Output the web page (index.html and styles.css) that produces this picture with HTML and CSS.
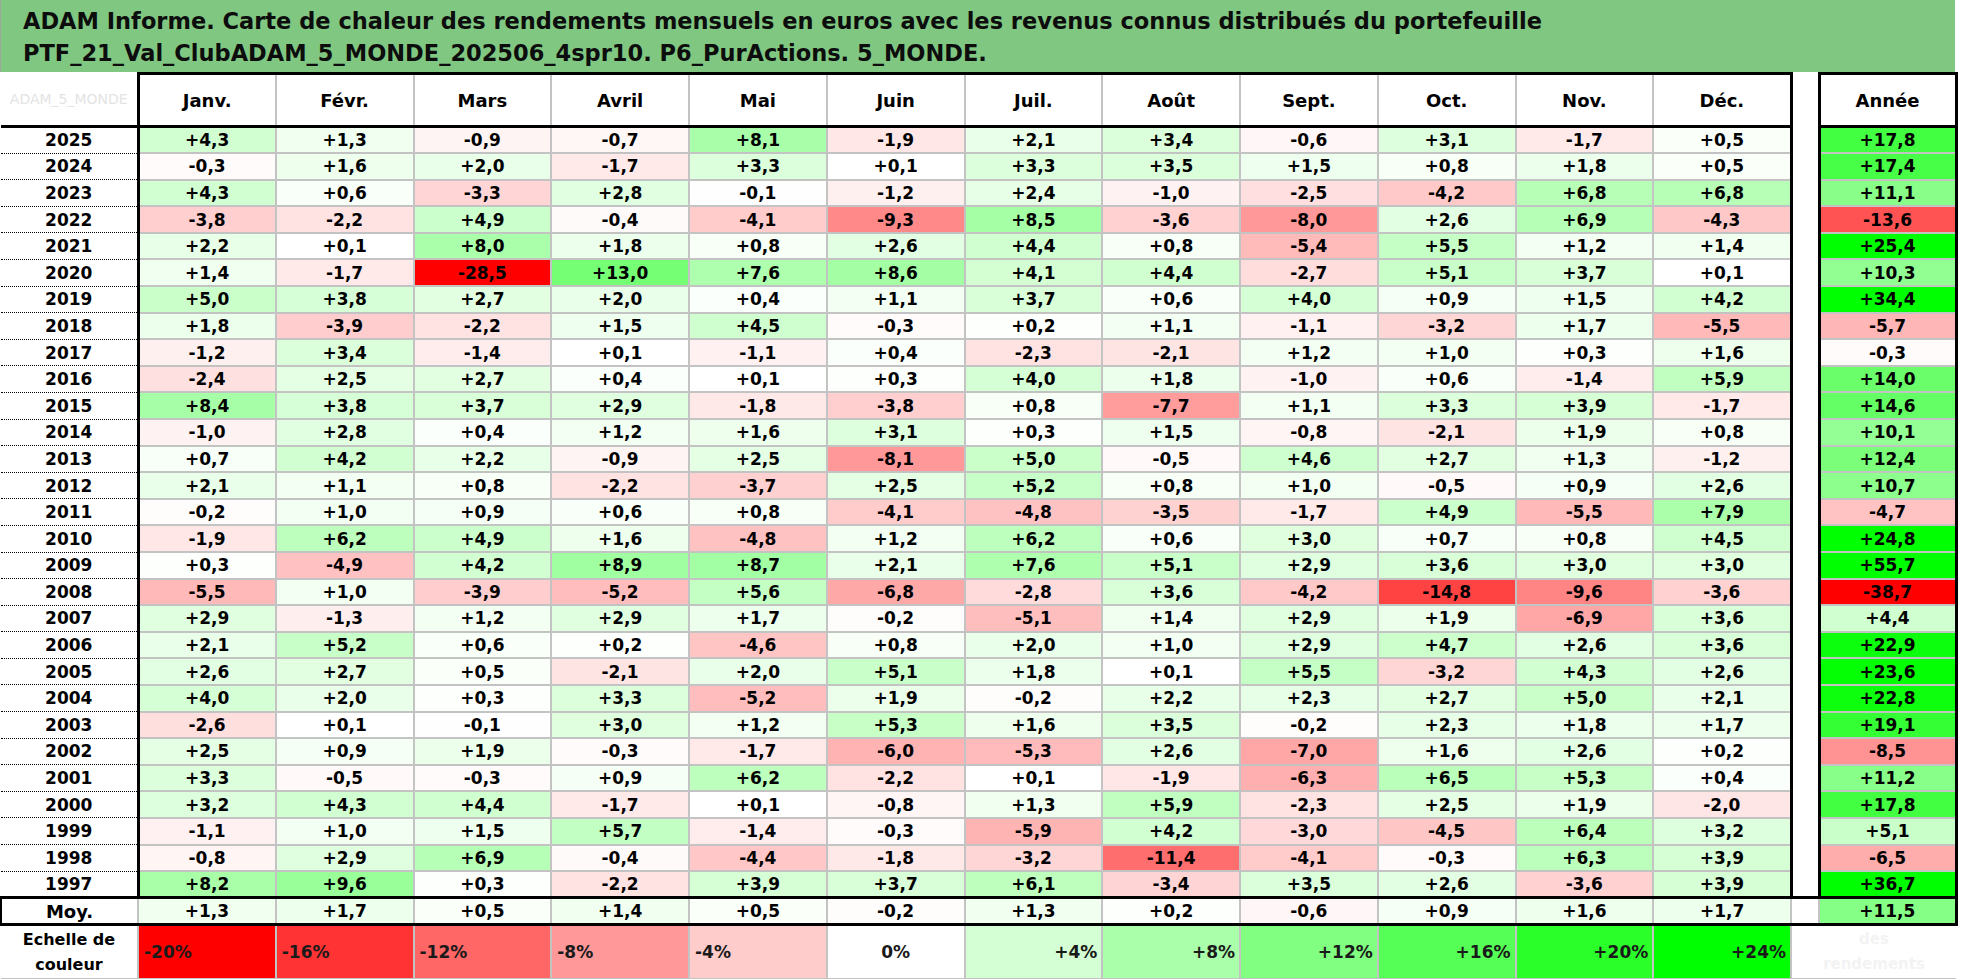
FILE: index.html
```html
<!DOCTYPE html>
<html lang="fr">
<head>
<meta charset="utf-8">
<title>ADAM Informe - Carte de chaleur</title>
<link rel="stylesheet" href="styles.css">
</head>
<body>
<div class="title">
  <div class="title-line">ADAM Informe. Carte de chaleur des rendements mensuels en euros avec les revenus connus distribués du portefeuille</div>
  <div class="title-line">PTF_21_Val_ClubADAM_5_MONDE_202506_4spr10. P6_PurActions. 5_MONDE.</div>
</div>
<table class="heat">
  <colgroup>
    <col class="c-year">
    <col class="c-m"><col class="c-m"><col class="c-m"><col class="c-m"><col class="c-m"><col class="c-m">
    <col class="c-m"><col class="c-m"><col class="c-m"><col class="c-m"><col class="c-m"><col class="c-m">
    <col class="c-gap">
    <col class="c-an">
  </colgroup>
  <thead>
    <tr class="hdr">
      <th class="corner"><span class="ghost-name">ADAM_5_MONDE</span></th>
      <th>Janv.</th><th>Févr.</th><th>Mars</th><th>Avril</th><th>Mai</th><th>Juin</th>
      <th>Juil.</th><th>Août</th><th>Sept.</th><th>Oct.</th><th>Nov.</th><th class="dec">Déc.</th>
      <th class="gap"></th><th class="an">Année</th>
    </tr>
  </thead>
  <tbody>
    <tr class="r"><th class="yr">2025</th><td class="v">+4,3</td><td class="v">+1,3</td><td class="v">-0,9</td><td class="v">-0,7</td><td class="v">+8,1</td><td class="v">-1,9</td><td class="v">+2,1</td><td class="v">+3,4</td><td class="v">-0,6</td><td class="v">+3,1</td><td class="v">-1,7</td><td class="v dec">+0,5</td><td class="gap"></td><td class="v an">+17,8</td></tr>
    <tr class="r"><th class="yr">2024</th><td class="v">-0,3</td><td class="v">+1,6</td><td class="v">+2,0</td><td class="v">-1,7</td><td class="v">+3,3</td><td class="v">+0,1</td><td class="v">+3,3</td><td class="v">+3,5</td><td class="v">+1,5</td><td class="v">+0,8</td><td class="v">+1,8</td><td class="v dec">+0,5</td><td class="gap"></td><td class="v an">+17,4</td></tr>
    <tr class="r"><th class="yr">2023</th><td class="v">+4,3</td><td class="v">+0,6</td><td class="v">-3,3</td><td class="v">+2,8</td><td class="v">-0,1</td><td class="v">-1,2</td><td class="v">+2,4</td><td class="v">-1,0</td><td class="v">-2,5</td><td class="v">-4,2</td><td class="v">+6,8</td><td class="v dec">+6,8</td><td class="gap"></td><td class="v an">+11,1</td></tr>
    <tr class="r"><th class="yr">2022</th><td class="v">-3,8</td><td class="v">-2,2</td><td class="v">+4,9</td><td class="v">-0,4</td><td class="v">-4,1</td><td class="v">-9,3</td><td class="v">+8,5</td><td class="v">-3,6</td><td class="v">-8,0</td><td class="v">+2,6</td><td class="v">+6,9</td><td class="v dec">-4,3</td><td class="gap"></td><td class="v an">-13,6</td></tr>
    <tr class="r"><th class="yr">2021</th><td class="v">+2,2</td><td class="v">+0,1</td><td class="v">+8,0</td><td class="v">+1,8</td><td class="v">+0,8</td><td class="v">+2,6</td><td class="v">+4,4</td><td class="v">+0,8</td><td class="v">-5,4</td><td class="v">+5,5</td><td class="v">+1,2</td><td class="v dec">+1,4</td><td class="gap"></td><td class="v an">+25,4</td></tr>
    <tr class="r"><th class="yr">2020</th><td class="v">+1,4</td><td class="v">-1,7</td><td class="v">-28,5</td><td class="v">+13,0</td><td class="v">+7,6</td><td class="v">+8,6</td><td class="v">+4,1</td><td class="v">+4,4</td><td class="v">-2,7</td><td class="v">+5,1</td><td class="v">+3,7</td><td class="v dec">+0,1</td><td class="gap"></td><td class="v an">+10,3</td></tr>
    <tr class="r"><th class="yr">2019</th><td class="v">+5,0</td><td class="v">+3,8</td><td class="v">+2,7</td><td class="v">+2,0</td><td class="v">+0,4</td><td class="v">+1,1</td><td class="v">+3,7</td><td class="v">+0,6</td><td class="v">+4,0</td><td class="v">+0,9</td><td class="v">+1,5</td><td class="v dec">+4,2</td><td class="gap"></td><td class="v an">+34,4</td></tr>
    <tr class="r"><th class="yr">2018</th><td class="v">+1,8</td><td class="v">-3,9</td><td class="v">-2,2</td><td class="v">+1,5</td><td class="v">+4,5</td><td class="v">-0,3</td><td class="v">+0,2</td><td class="v">+1,1</td><td class="v">-1,1</td><td class="v">-3,2</td><td class="v">+1,7</td><td class="v dec">-5,5</td><td class="gap"></td><td class="v an">-5,7</td></tr>
    <tr class="r"><th class="yr">2017</th><td class="v">-1,2</td><td class="v">+3,4</td><td class="v">-1,4</td><td class="v">+0,1</td><td class="v">-1,1</td><td class="v">+0,4</td><td class="v">-2,3</td><td class="v">-2,1</td><td class="v">+1,2</td><td class="v">+1,0</td><td class="v">+0,3</td><td class="v dec">+1,6</td><td class="gap"></td><td class="v an">-0,3</td></tr>
    <tr class="r"><th class="yr">2016</th><td class="v">-2,4</td><td class="v">+2,5</td><td class="v">+2,7</td><td class="v">+0,4</td><td class="v">+0,1</td><td class="v">+0,3</td><td class="v">+4,0</td><td class="v">+1,8</td><td class="v">-1,0</td><td class="v">+0,6</td><td class="v">-1,4</td><td class="v dec">+5,9</td><td class="gap"></td><td class="v an">+14,0</td></tr>
    <tr class="r"><th class="yr">2015</th><td class="v">+8,4</td><td class="v">+3,8</td><td class="v">+3,7</td><td class="v">+2,9</td><td class="v">-1,8</td><td class="v">-3,8</td><td class="v">+0,8</td><td class="v">-7,7</td><td class="v">+1,1</td><td class="v">+3,3</td><td class="v">+3,9</td><td class="v dec">-1,7</td><td class="gap"></td><td class="v an">+14,6</td></tr>
    <tr class="r"><th class="yr">2014</th><td class="v">-1,0</td><td class="v">+2,8</td><td class="v">+0,4</td><td class="v">+1,2</td><td class="v">+1,6</td><td class="v">+3,1</td><td class="v">+0,3</td><td class="v">+1,5</td><td class="v">-0,8</td><td class="v">-2,1</td><td class="v">+1,9</td><td class="v dec">+0,8</td><td class="gap"></td><td class="v an">+10,1</td></tr>
    <tr class="r"><th class="yr">2013</th><td class="v">+0,7</td><td class="v">+4,2</td><td class="v">+2,2</td><td class="v">-0,9</td><td class="v">+2,5</td><td class="v">-8,1</td><td class="v">+5,0</td><td class="v">-0,5</td><td class="v">+4,6</td><td class="v">+2,7</td><td class="v">+1,3</td><td class="v dec">-1,2</td><td class="gap"></td><td class="v an">+12,4</td></tr>
    <tr class="r"><th class="yr">2012</th><td class="v">+2,1</td><td class="v">+1,1</td><td class="v">+0,8</td><td class="v">-2,2</td><td class="v">-3,7</td><td class="v">+2,5</td><td class="v">+5,2</td><td class="v">+0,8</td><td class="v">+1,0</td><td class="v">-0,5</td><td class="v">+0,9</td><td class="v dec">+2,6</td><td class="gap"></td><td class="v an">+10,7</td></tr>
    <tr class="r"><th class="yr">2011</th><td class="v">-0,2</td><td class="v">+1,0</td><td class="v">+0,9</td><td class="v">+0,6</td><td class="v">+0,8</td><td class="v">-4,1</td><td class="v">-4,8</td><td class="v">-3,5</td><td class="v">-1,7</td><td class="v">+4,9</td><td class="v">-5,5</td><td class="v dec">+7,9</td><td class="gap"></td><td class="v an">-4,7</td></tr>
    <tr class="r"><th class="yr">2010</th><td class="v">-1,9</td><td class="v">+6,2</td><td class="v">+4,9</td><td class="v">+1,6</td><td class="v">-4,8</td><td class="v">+1,2</td><td class="v">+6,2</td><td class="v">+0,6</td><td class="v">+3,0</td><td class="v">+0,7</td><td class="v">+0,8</td><td class="v dec">+4,5</td><td class="gap"></td><td class="v an">+24,8</td></tr>
    <tr class="r"><th class="yr">2009</th><td class="v">+0,3</td><td class="v">-4,9</td><td class="v">+4,2</td><td class="v">+8,9</td><td class="v">+8,7</td><td class="v">+2,1</td><td class="v">+7,6</td><td class="v">+5,1</td><td class="v">+2,9</td><td class="v">+3,6</td><td class="v">+3,0</td><td class="v dec">+3,0</td><td class="gap"></td><td class="v an">+55,7</td></tr>
    <tr class="r"><th class="yr">2008</th><td class="v">-5,5</td><td class="v">+1,0</td><td class="v">-3,9</td><td class="v">-5,2</td><td class="v">+5,6</td><td class="v">-6,8</td><td class="v">-2,8</td><td class="v">+3,6</td><td class="v">-4,2</td><td class="v">-14,8</td><td class="v">-9,6</td><td class="v dec">-3,6</td><td class="gap"></td><td class="v an">-38,7</td></tr>
    <tr class="r"><th class="yr">2007</th><td class="v">+2,9</td><td class="v">-1,3</td><td class="v">+1,2</td><td class="v">+2,9</td><td class="v">+1,7</td><td class="v">-0,2</td><td class="v">-5,1</td><td class="v">+1,4</td><td class="v">+2,9</td><td class="v">+1,9</td><td class="v">-6,9</td><td class="v dec">+3,6</td><td class="gap"></td><td class="v an">+4,4</td></tr>
    <tr class="r"><th class="yr">2006</th><td class="v">+2,1</td><td class="v">+5,2</td><td class="v">+0,6</td><td class="v">+0,2</td><td class="v">-4,6</td><td class="v">+0,8</td><td class="v">+2,0</td><td class="v">+1,0</td><td class="v">+2,9</td><td class="v">+4,7</td><td class="v">+2,6</td><td class="v dec">+3,6</td><td class="gap"></td><td class="v an">+22,9</td></tr>
    <tr class="r"><th class="yr">2005</th><td class="v">+2,6</td><td class="v">+2,7</td><td class="v">+0,5</td><td class="v">-2,1</td><td class="v">+2,0</td><td class="v">+5,1</td><td class="v">+1,8</td><td class="v">+0,1</td><td class="v">+5,5</td><td class="v">-3,2</td><td class="v">+4,3</td><td class="v dec">+2,6</td><td class="gap"></td><td class="v an">+23,6</td></tr>
    <tr class="r"><th class="yr">2004</th><td class="v">+4,0</td><td class="v">+2,0</td><td class="v">+0,3</td><td class="v">+3,3</td><td class="v">-5,2</td><td class="v">+1,9</td><td class="v">-0,2</td><td class="v">+2,2</td><td class="v">+2,3</td><td class="v">+2,7</td><td class="v">+5,0</td><td class="v dec">+2,1</td><td class="gap"></td><td class="v an">+22,8</td></tr>
    <tr class="r"><th class="yr">2003</th><td class="v">-2,6</td><td class="v">+0,1</td><td class="v">-0,1</td><td class="v">+3,0</td><td class="v">+1,2</td><td class="v">+5,3</td><td class="v">+1,6</td><td class="v">+3,5</td><td class="v">-0,2</td><td class="v">+2,3</td><td class="v">+1,8</td><td class="v dec">+1,7</td><td class="gap"></td><td class="v an">+19,1</td></tr>
    <tr class="r"><th class="yr">2002</th><td class="v">+2,5</td><td class="v">+0,9</td><td class="v">+1,9</td><td class="v">-0,3</td><td class="v">-1,7</td><td class="v">-6,0</td><td class="v">-5,3</td><td class="v">+2,6</td><td class="v">-7,0</td><td class="v">+1,6</td><td class="v">+2,6</td><td class="v dec">+0,2</td><td class="gap"></td><td class="v an">-8,5</td></tr>
    <tr class="r"><th class="yr">2001</th><td class="v">+3,3</td><td class="v">-0,5</td><td class="v">-0,3</td><td class="v">+0,9</td><td class="v">+6,2</td><td class="v">-2,2</td><td class="v">+0,1</td><td class="v">-1,9</td><td class="v">-6,3</td><td class="v">+6,5</td><td class="v">+5,3</td><td class="v dec">+0,4</td><td class="gap"></td><td class="v an">+11,2</td></tr>
    <tr class="r"><th class="yr">2000</th><td class="v">+3,2</td><td class="v">+4,3</td><td class="v">+4,4</td><td class="v">-1,7</td><td class="v">+0,1</td><td class="v">-0,8</td><td class="v">+1,3</td><td class="v">+5,9</td><td class="v">-2,3</td><td class="v">+2,5</td><td class="v">+1,9</td><td class="v dec">-2,0</td><td class="gap"></td><td class="v an">+17,8</td></tr>
    <tr class="r"><th class="yr">1999</th><td class="v">-1,1</td><td class="v">+1,0</td><td class="v">+1,5</td><td class="v">+5,7</td><td class="v">-1,4</td><td class="v">-0,3</td><td class="v">-5,9</td><td class="v">+4,2</td><td class="v">-3,0</td><td class="v">-4,5</td><td class="v">+6,4</td><td class="v dec">+3,2</td><td class="gap"></td><td class="v an">+5,1</td></tr>
    <tr class="r"><th class="yr">1998</th><td class="v">-0,8</td><td class="v">+2,9</td><td class="v">+6,9</td><td class="v">-0,4</td><td class="v">-4,4</td><td class="v">-1,8</td><td class="v">-3,2</td><td class="v">-11,4</td><td class="v">-4,1</td><td class="v">-0,3</td><td class="v">+6,3</td><td class="v dec">+3,9</td><td class="gap"></td><td class="v an">-6,5</td></tr>
    <tr class="r"><th class="yr">1997</th><td class="v">+8,2</td><td class="v">+9,6</td><td class="v">+0,3</td><td class="v">-2,2</td><td class="v">+3,9</td><td class="v">+3,7</td><td class="v">+6,1</td><td class="v">-3,4</td><td class="v">+3,5</td><td class="v">+2,6</td><td class="v">-3,6</td><td class="v dec">+3,9</td><td class="gap"></td><td class="v an">+36,7</td></tr>
    <tr class="moy"><th class="yr">Moy.</th><td class="v">+1,3</td><td class="v">+1,7</td><td class="v">+0,5</td><td class="v">+1,4</td><td class="v">+0,5</td><td class="v">-0,2</td><td class="v">+1,3</td><td class="v">+0,2</td><td class="v">-0,6</td><td class="v">+0,9</td><td class="v">+1,6</td><td class="v dec">+1,7</td><td class="gap"></td><td class="v an">+11,5</td></tr>
    <tr class="scale">
      <th class="lbl">Echelle de<br>couleur</th>
      <td class="s s-m20 al">-20%</td>
      <td class="s s-m16 al">-16%</td>
      <td class="s s-m12 al">-12%</td>
      <td class="s s-m8 al">-8%</td>
      <td class="s s-m4 al">-4%</td>
      <td class="s s-0 ac">0%</td>
      <td class="s s-p4 ar">+4%</td>
      <td class="s s-p8 ar">+8%</td>
      <td class="s s-p12 ar">+12%</td>
      <td class="s s-p16 ar">+16%</td>
      <td class="s s-p20 ar">+20%</td>
      <td class="s s-p24 ar">+24%</td>
      <td class="ghost" colspan="2">des<br>rendements</td>
    </tr>
  </tbody>
</table>
<script src="script.js"></script>
</body>
</html>
```

FILE: styles.css
```css
html, body {
  margin: 0;
  padding: 0;
  background: #ffffff;
}

body {
  width: 1961px;
  height: 979px;
  overflow: hidden;
  font-family: "DejaVu Sans", "Liberation Sans", sans-serif;
  color: #000;
}

.title {
  width: 1955px;
  height: 72px;
  box-sizing: border-box;
  padding: 5px 0 0 22px;
  background: #80c882;
  border-left: 1px solid #9aa89a;
}

.title-line {
  font-weight: bold;
  font-size: 22.5px;
  line-height: 32px;
  color: #0d0d0d;
  white-space: nowrap;
}

.heat {
  width: 1955px;
  border-collapse: collapse;
  table-layout: fixed;
}

.c-year { width: 137px; }
.c-m { width: 137.75px; }
.c-gap { width: 28px; }
.c-an { width: 137px; }

.heat th,
.heat td {
  padding: 0;
  text-align: center;
  vertical-align: middle;
  font-weight: bold;
  white-space: nowrap;
  overflow: hidden;
}

/* header row */
.hdr { height: 53px; }
.hdr th {
  font-size: 18px;
  border: 2px solid #c3c3c3;
  border-top: 3px solid #000;
  border-bottom: 3px solid #000;
}
.hdr th.corner {
  border: none;
  border-right: 3px solid #000;
  border-bottom: 3px solid #000;
  text-align: center;
}
.ghost-name {
  display: block;
  font-weight: normal;
  font-size: 14px;
  color: #e4e4e4;
}

/* data rows */
.r { height: 26.6px; }
.r td, .moy td {
  font-size: 17px;
  border: 2px solid #c3c3c3;
}
.heat .yr {
  font-size: 17px;
  border-right: 3px solid #000;
  border-bottom: 1px dotted #000;
}

.heat .dec { border-right: 3px solid #000; }
.heat .an {
  border-left: 3px solid #000;
  border-right: 3px solid #000;
}
.heat .gap {
  border: none;
  background: #fff;
}

/* average row */
.moy { height: 27px; }
.moy th, .moy td {
  border-top: 3px solid #000;
  border-bottom: 3px solid #000;
}
.moy .yr {
  font-size: 18px;
  border-right: 2px solid #c3c3c3;
  border-bottom: 3px solid #000;
  border-left: 2px solid #000;
}
.moy td.dec { border-right: 2px solid #c3c3c3; }
.moy td.an { border-left: 2px solid #c3c3c3; }
.moy td.gap {
  border-top: 3px solid #000;
  border-bottom: 3px solid #000;
}

/* colour scale row */
.scale { height: 54px; }
.scale .lbl {
  font-size: 16px;
  line-height: 25px;
  border-bottom: 2px solid #c3c3c3;
  border-right: 2px solid #c3c3c3;
}
.scale .s {
  font-size: 17px;
  border: 2px solid #c3c3c3;
  color: #1a1a1a;
}
.scale .al { text-align: left; padding-left: 5px; }
.scale .ac { text-align: center; }
.scale .ar { text-align: right; padding-right: 4px; }

.s-m20 { background: #ff0000; }
.s-m16 { background: #ff3333; }
.s-m12 { background: #ff6666; }
.s-m8  { background: #ff9999; }
.s-m4  { background: #ffcccc; }
.s-0   { background: #ffffff; }
.s-p4  { background: #d4ffd4; }
.s-p8  { background: #aaffaa; }
.s-p12 { background: #80ff80; }
.s-p16 { background: #55ff55; }
.s-p20 { background: #2aff2a; }
.s-p24 { background: #00ff00; }

.scale .ghost {
  font-size: 15px;
  line-height: 25px;
  background: #ffffff;
  color: #f3f3f3;
  border-left: 2px solid #c3c3c3;
  border-bottom: 2px solid #c3c3c3;
}
```

FILE: script.js
```js
(function () {
  var cells = document.querySelectorAll('.heat td.v');
  for (var i = 0; i < cells.length; i++) {
    var txt = cells[i].textContent.trim().replace(',', '.').replace('+', '');
    var v = parseFloat(txt);
    if (isNaN(v)) continue;
    var r, g, b;
    if (v < 0) {
      var t = Math.min(1, -v / 20);
      r = 255;
      g = b = Math.round(255 * (1 - t));
    } else {
      var u = Math.min(1, v / 24);
      g = 255;
      r = b = Math.round(255 * (1 - u));
    }
    cells[i].style.backgroundColor = 'rgb(' + r + ',' + g + ',' + b + ')';
  }
})();
```
